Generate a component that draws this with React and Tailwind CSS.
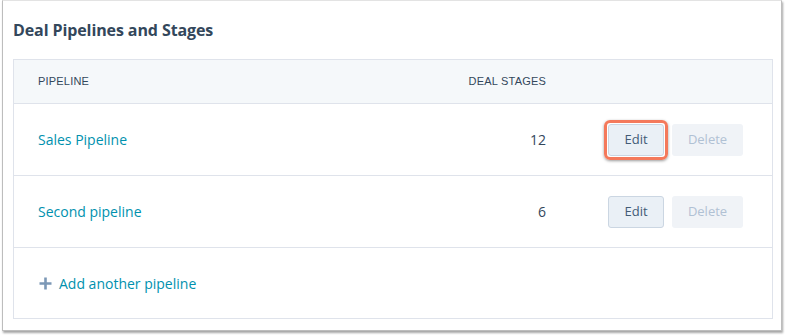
export default function App() {
  const rows = [
    { name: "Sales Pipeline", stages: 12, highlight: true },
    { name: "Second pipeline", stages: 6, highlight: false },
  ];
  return (
    <div className="w-[785px] h-[335px] bg-white overflow-hidden" style={{ fontFamily: "'Open Sans', 'Noto Sans', sans-serif" }}>
      <div className="ml-[2px] w-[780px] h-[331px] bg-white border border-[#bdbdbd] border-t-[#e3e3e3] shadow-[1px_2px_2px_rgba(0,0,0,0.35)] pl-[10px] pr-[8px]">
        <div className="h-[58px] flex items-center">
          <h1 className="text-[16px] font-bold text-[#33475b] leading-none tracking-[-0.1px]">Deal Pipelines and Stages</h1>
        </div>
        <div className="border border-[#dfe3eb]">
          <div className="h-[44px] bg-[#f5f8fa] border-b border-[#dfe3eb] flex items-center text-[11px] tracking-[0.2px] text-[#33475b] uppercase" style={{ fontFamily: "'Liberation Sans', Arial, sans-serif" }}>
            <div className="flex-1 pl-[24px]">Pipeline</div>
            <div className="w-[100px] text-right">Deal Stages</div>
            <div className="w-[226px]"></div>
          </div>
          {rows.map((r) => (
            <div key={r.name} className="h-[72px] border-b border-[#dfe3eb] flex items-center text-[14px]">
              <div className="flex-1 pl-[24px] text-[#0091ae]">{r.name}</div>
              <div className="w-[100px] text-right text-[#33475b]">{r.stages}</div>
              <div className="ml-[62px] mr-[29px] flex items-center gap-[8px]">
                <div className="relative">
                  {r.highlight && (
                    <div className="absolute -inset-[4px] rounded-[6px] border-[3px] border-[#f4795b] shadow-[0_1px_3px_rgba(0,0,0,0.4)]"></div>
                  )}
                  <button className="w-[56px] h-[32px] rounded-[3px] bg-[#eaf0f6] border border-[#cbd6e2] text-[13px] text-[#425b76]">Edit</button>
                </div>
                <button className="w-[71px] h-[32px] rounded-[3px] bg-[#f0f3f7] text-[13px] text-[#b0c1d4]">Delete</button>
              </div>
            </div>
          ))}
          <div className="h-[70px] flex items-center pl-[25px] text-[14px] text-[#0091ae]">
            <svg width="13" height="13" viewBox="0 0 13 13" className="mr-[7px]">
              <path d="M6.5 0.5v12M0.5 6.5h12" stroke="#7c98b6" strokeWidth="2.6" />
            </svg>
            Add another pipeline
          </div>
        </div>
      </div>
    </div>
  );
}
